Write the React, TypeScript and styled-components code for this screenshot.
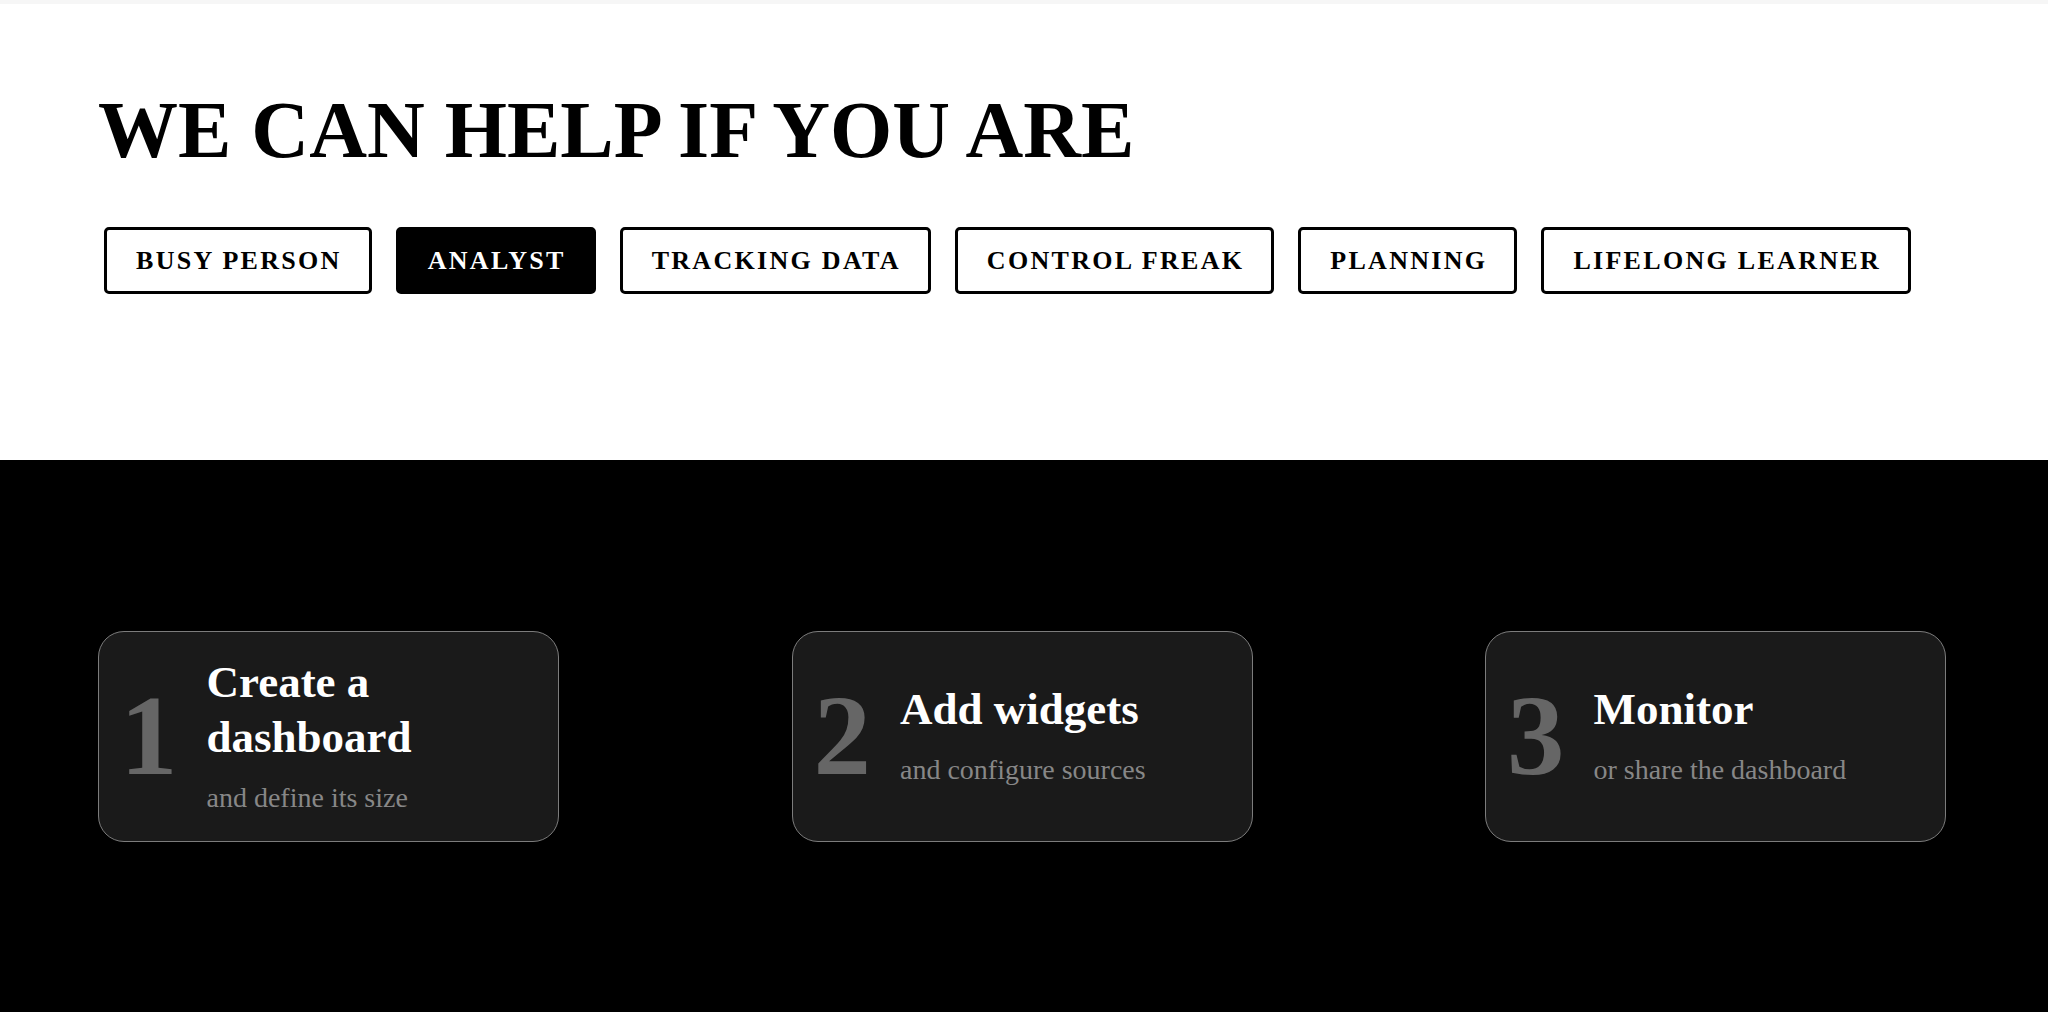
import React, { useState } from 'react'
import styled, { createGlobalStyle } from 'styled-components'

const GlobalStyle = createGlobalStyle`
  html, body {
    margin: 0;
    padding: 0;
    background: #000;
  }
  body {
    font-family: "Liberation Serif", "Times New Roman", Times, serif;
  }
  * {
    box-sizing: border-box;
  }
`

const Page = styled.div`
  display: flex;
  flex-direction: column;
  min-height: 1012px;
`

const Intro = styled.section`
  background: #fff;
  border-top: 4px solid #f6f6f6;
  padding: 86px 98px 166px;
`

const Heading = styled.h1`
  margin: 0;
  font-size: 80px;
  line-height: 1;
  font-weight: 700;
  color: #000;
`

const ChipRow = styled.div`
  display: flex;
  gap: 24px;
  margin: 57px 0 0 6px;
`

const Chip = styled.button<{ $active?: boolean }>`
  display: inline-flex;
  align-items: center;
  height: 67px;
  padding: 0 27px 0 29px;
  border: 3px solid #000;
  border-radius: 5px;
  background: ${(p) => (p.$active ? '#000' : '#fff')};
  color: ${(p) => (p.$active ? '#fff' : '#000')};
  font-family: inherit;
  font-size: 26px;
  font-weight: 700;
  letter-spacing: 2.3px;
  cursor: pointer;
`

const Steps = styled.section`
  flex: 1;
  background: #000;
  padding: 171px 102px 170px 98px;
  display: flex;
  justify-content: space-between;
  align-items: stretch;
`

const Card = styled.div`
  width: 461px;
  display: flex;
  align-items: center;
  gap: 29px;
  padding: 22px 24px 24px 21px;
  background: #1a1a1a;
  border: 1px solid #7c7c7c;
  border-radius: 26px;
`

const StepNumber = styled.div`
  font-size: 115px;
  line-height: 1;
  font-weight: 700;
  color: #666;
`

const StepText = styled.div`
  display: flex;
  flex-direction: column;
`

const StepTitle = styled.h3`
  margin: 0;
  font-size: 45px;
  line-height: 55px;
  font-weight: 700;
  color: #fff;
`

const StepCaption = styled.p`
  margin: 15px 0 0;
  font-size: 28px;
  line-height: 1.3;
  color: #878787;
`

const personas = [
  'BUSY PERSON',
  'ANALYST',
  'TRACKING DATA',
  'CONTROL FREAK',
  'PLANNING',
  'LIFELONG LEARNER',
]

const steps = [
  { n: '1', title: ['Create a', 'dashboard'], caption: 'and define its size' },
  { n: '2', title: ['Add widgets'], caption: 'and configure sources' },
  { n: '3', title: ['Monitor'], caption: 'or share the dashboard' },
]

export default function App() {
  const [active, setActive] = useState('ANALYST')

  return (
    <Page>
      <GlobalStyle />
      <Intro>
        <Heading>WE CAN HELP IF YOU ARE</Heading>
        <ChipRow>
          {personas.map((p) => (
            <Chip key={p} $active={p === active} onClick={() => setActive(p)}>
              {p}
            </Chip>
          ))}
        </ChipRow>
      </Intro>
      <Steps>
        {steps.map((s) => (
          <Card key={s.n}>
            <StepNumber>{s.n}</StepNumber>
            <StepText>
              <StepTitle>
                {s.title.map((line, i) => (
                  <React.Fragment key={line}>
                    {i > 0 && <br />}
                    {line}
                  </React.Fragment>
                ))}
              </StepTitle>
              <StepCaption>{s.caption}</StepCaption>
            </StepText>
          </Card>
        ))}
      </Steps>
    </Page>
  )
}
